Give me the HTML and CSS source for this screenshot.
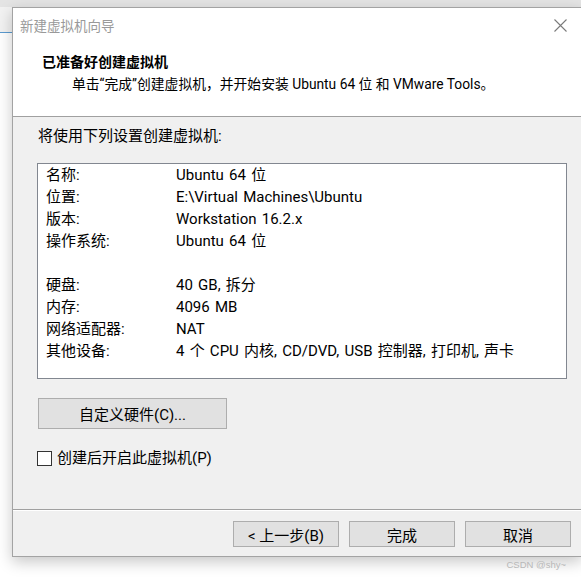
FILE: index.html
```html
<!DOCTYPE html>
<html lang="zh-CN">
<head>
<meta charset="utf-8">
<title>新建虚拟机向导</title>
<link rel="stylesheet" href="styles.css">
</head>
<body>
<div class="window">
  <div class="header">
    <div class="titlebar">
      <span class="title">新建虚拟机向导</span>
      <svg class="close" width="13" height="13" viewBox="0 0 13 13"><path d="M0.5 0.5 L12.5 12.5 M12.5 0.5 L0.5 12.5" stroke="#7a7a7a" stroke-width="1.1" fill="none"/></svg>
    </div>
    <div class="h-title">已准备好创建虚拟机</div>
    <div class="h-sub">单击“完成”创建虚拟机，并开始安装 Ubuntu 64 位 和 VMware Tools。</div>
  </div>
  <div class="content">
    <div class="intro">将使用下列设置创建虚拟机:</div>
    <div class="listbox">
      <div class="row"><span class="k">名称:</span><span class="v">Ubuntu 64 位</span></div>
      <div class="row"><span class="k">位置:</span><span class="v">E:\Virtual Machines\Ubuntu</span></div>
      <div class="row"><span class="k">版本:</span><span class="v">Workstation 16.2.x</span></div>
      <div class="row"><span class="k">操作系统:</span><span class="v">Ubuntu 64 位</span></div>
      <div class="row"></div>
      <div class="row"><span class="k">硬盘:</span><span class="v">40 GB, 拆分</span></div>
      <div class="row"><span class="k">内存:</span><span class="v">4096 MB</span></div>
      <div class="row"><span class="k">网络适配器:</span><span class="v">NAT</span></div>
      <div class="row"><span class="k">其他设备:</span><span class="v">4 个 CPU 内核, CD/DVD, USB 控制器, 打印机, 声卡</span></div>
    </div>
    <button class="btn btn-custom">自定义硬件(C)...</button>
    <label class="check"><span class="box"></span><span>创建后开启此虚拟机(P)</span></label>
  </div>
  <div class="footer">
    <button class="btn btn-foot">&lt; 上一步(B)</button>
    <button class="btn btn-foot">完成</button>
    <button class="btn btn-foot">取消</button>
  </div>
</div>
<div class="watermark">CSDN @shy~</div>
</body>
</html>
```

FILE: styles.css
```css
html, body {
  margin: 0;
  padding: 0;
}
body {
  width: 581px;
  height: 578px;
  overflow: hidden;
  padding-top: 7px;
  box-sizing: border-box;
  font-family: Roboto, "Noto Sans CJK SC", sans-serif;
  font-size: 15px;
  color: #000;
  background:
    linear-gradient(#e4e4e4, #e4e4e4) 0 0 / 100% 7px no-repeat,
    linear-gradient(to bottom, #f2f2f2 0 25px, #5b9bd0 25px 26px, #ffffff 26px) 0 7px / 12px 100% no-repeat,
    #ffffff;
}
.window {
  margin-left: 12px;
  width: 570px;
  height: 550px;
  box-sizing: border-box;
  border: 1px solid #a3a3a3;
  background: #f0f0f0;
  box-shadow: 0 5px 14px rgba(0, 0, 0, 0.22);
  display: flex;
  flex-direction: column;
}
.header {
  background: #fff;
  height: 109px;
  box-sizing: border-box;
  border-bottom: 1px solid #a0a0a0;
  flex: none;
}
.titlebar {
  height: 34px;
  display: flex;
  align-items: center;
  justify-content: space-between;
  padding: 0 14px 0 7px;
}
.title {
  font-size: 13.5px;
  color: #999;
}
.close {
  display: block;
}
.h-title {
  margin-top: 10px;
  padding-left: 29px;
  font-size: 14px;
  font-weight: bold;
  line-height: 20px;
}
.h-sub {
  padding-left: 59px;
  font-size: 13.8px;
  line-height: 22px;
  margin-top: 1px;
}
.content {
  flex: 1;
  padding: 9px 0 0 24px;
}
.intro {
  line-height: 20px;
  padding-left: 1px;
}
.listbox {
  margin-top: 17px;
  width: 530px;
  height: 216px;
  box-sizing: border-box;
  border: 1px solid #828790;
  background: #fff;
  padding: 0 0 0 8px;
}
.row {
  display: flex;
  height: 22px;
  line-height: 22px;
  white-space: nowrap;
}
.k {
  width: 130px;
  flex: none;
}
.v {
  word-spacing: 1.5px;
}
.btn {
  font-family: Roboto, "Noto Sans CJK SC", sans-serif;
  font-size: 15px;
  color: #000;
  background: #e1e1e1;
  border: 1px solid #adadad;
  padding: 0;
  margin: 0;
  display: flex;
  align-items: center;
  justify-content: center;
}
.btn-custom {
  margin-top: 19px;
  margin-left: 1px;
  width: 189px;
  height: 31px;
}
.check {
  margin-top: 19px;
  display: flex;
  align-items: center;
  gap: 5px;
  line-height: 20px;
}
.box {
  width: 15px;
  height: 15px;
  box-sizing: border-box;
  border: 1px solid #333;
  background: #fff;
  flex: none;
}
.footer {
  flex: none;
  height: 47px;
  box-sizing: border-box;
  border-top: 1px solid #a0a0a0;
  box-shadow: inset 0 1px #fff;
  padding: 11px 10px 0 0;
  display: flex;
  justify-content: flex-end;
  gap: 10px;
}
.btn-foot {
  width: 106px;
  height: 26px;
}
.watermark {
  font-family: "Liberation Sans", sans-serif;
  font-size: 9.5px;
  color: #b8b8b8;
  text-align: right;
  padding-right: 15px;
  margin-top: 2px;
}
```
